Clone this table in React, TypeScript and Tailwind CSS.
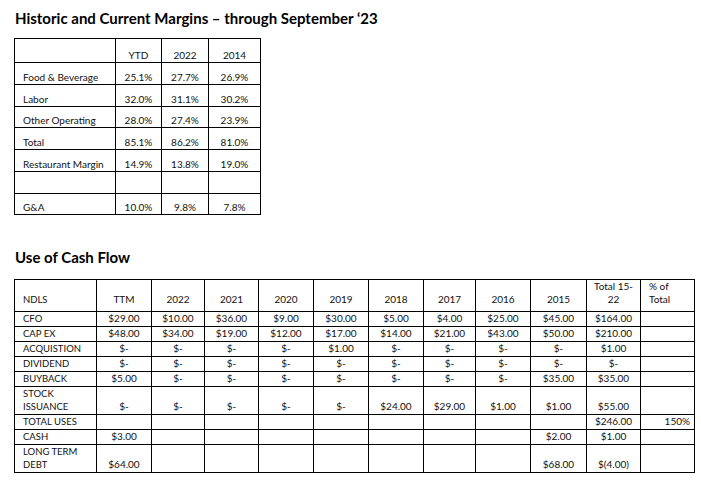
import React from 'react';

const margins = [
  ['Food & Beverage', '25.1%', '27.7%', '26.9%'],
  ['Labor', '32.0%', '31.1%', '30.2%'],
  ['Other Operating', '28.0%', '27.4%', '23.9%'],
  ['Total', '85.1%', '86.2%', '81.0%'],
  ['Restaurant Margin', '14.9%', '13.8%', '19.0%'],
  ['', '', '', ''],
  ['G&A', '10.0%', '9.8%', '7.8%'],
];

const cashCols = [82, 55, 53, 54, 55, 55, 55, 52, 55, 56, 54, 54];

const cashRows: { label: string[]; vals: string[]; tall?: boolean }[] = [
  { label: ['CFO'], vals: ['$29.00', '$10.00', '$36.00', '$9.00', '$30.00', '$5.00', '$4.00', '$25.00', '$45.00', '$164.00', ''] },
  { label: ['CAP EX'], vals: ['$48.00', '$34.00', '$19.00', '$12.00', '$17.00', '$14.00', '$21.00', '$43.00', '$50.00', '$210.00', ''] },
  { label: ['ACQUISTION'], vals: ['$-', '$-', '$-', '$-', '$1.00', '$-', '$-', '$-', '$-', '$1.00', ''] },
  { label: ['DIVIDEND'], vals: ['$-', '$-', '$-', '$-', '$-', '$-', '$-', '$-', '$-', '$-', ''] },
  { label: ['BUYBACK'], vals: ['$5.00', '$-', '$-', '$-', '$-', '$-', '$-', '$-', '$35.00', '$35.00', ''] },
  { label: ['STOCK', 'ISSUANCE'], vals: ['$-', '$-', '$-', '$-', '$-', '$24.00', '$29.00', '$1.00', '$1.00', '$55.00', ''], tall: true },
  { label: ['TOTAL USES'], vals: ['', '', '', '', '', '', '', '', '', '$246.00', '150%'] },
  { label: ['CASH'], vals: ['$3.00', '', '', '', '', '', '', '', '$2.00', '$1.00', ''] },
  { label: ['LONG TERM', 'DEBT'], vals: ['$64.00', '', '', '', '', '', '', '', '$68.00', '$(4.00)', ''], tall: true },
];

const headers = ['TTM', '2022', '2021', '2020', '2019', '2018', '2017', '2016', '2015'];

export default function App() {
  return (
    <div className="w-[701px] h-[480px] bg-white text-[#111] font-['Lato',sans-serif] pl-[14px] pt-[8px] overflow-hidden">
      {/* Margins */}
      <h1 className="text-[15px] font-bold leading-[20px] ml-[1px] text-black">
        Historic and Current Margins – through September ‘23
      </h1>
      <table className="mt-[10px] border-collapse table-fixed w-[246px] text-[10px]">
        <colgroup>
          <col className="w-[101px]" />
          <col className="w-[46px]" />
          <col className="w-[47px]" />
          <col className="w-[52px]" />
        </colgroup>
        <tbody>
          <tr className="h-[24px]">
            <td className="border border-black" />
            {['YTD', '2022', '2014'].map((h) => (
              <td key={h} className="border border-black text-center align-bottom pb-[1px] leading-[12px]">
                {h}
              </td>
            ))}
          </tr>
          {margins.map((r, i) => (
            <tr key={i} className={i === 2 || i === 6 ? 'h-[21px]' : 'h-[22px]'}>
              <td className="border border-black align-bottom pl-[8px] pb-[1px] leading-[12px]">{r[0]}</td>
              {r.slice(1).map((v, j) => (
                <td key={j} className="border border-black text-center align-bottom pb-[1px] leading-[12px]">
                  {v}
                </td>
              ))}
            </tr>
          ))}
        </tbody>
      </table>

      {/* Cash flow */}
      <h2 className="mt-[32px] text-[15px] font-bold leading-[20px] ml-[1px] text-black">Use of Cash Flow</h2>
      <table className="mt-[12px] border-collapse table-fixed w-[680px] text-[10px]">
        <colgroup>
          {cashCols.map((w, i) => (
            <col key={i} style={{ width: w }} />
          ))}
        </colgroup>
        <tbody>
          <tr className="h-[32px]">
            <td className="border border-black align-bottom pl-[8px] leading-[13px] pb-[5px] text-[9.5px]">NDLS</td>
            {headers.map((h) => (
              <td key={h} className="border border-black text-center align-bottom leading-[13px] pb-[5px]">
                {h}
              </td>
            ))}
            <td className="border border-black text-center align-bottom leading-[13px] pb-[5px]">
              Total 15-
              <br />
              22
            </td>
            <td className="border border-black align-bottom pl-[8px] leading-[13px] pb-[5px]">
              % of
              <br />
              Total
            </td>
          </tr>
          {cashRows.map((r, i) => (
            <tr key={i} className={r.tall ? 'h-[28px]' : 'h-[14px]'}>
              <td className="border border-black align-bottom pl-[8px] leading-[13px] pb-[1px] text-[9.5px]">
                {r.label.map((l, k) => (
                  <div key={k}>{l}</div>
                ))}
              </td>
              {r.vals.map((v, j) => (
                <td
                  key={j}
                  className={
                    j === 10
                      ? 'border border-black align-bottom text-right pr-[4px] leading-[13px] pb-[1px]'
                      : 'border border-black align-bottom text-center leading-[13px] pb-[1px]'
                  }
                >
                  {v}
                </td>
              ))}
            </tr>
          ))}
        </tbody>
      </table>
    </div>
  );
}
